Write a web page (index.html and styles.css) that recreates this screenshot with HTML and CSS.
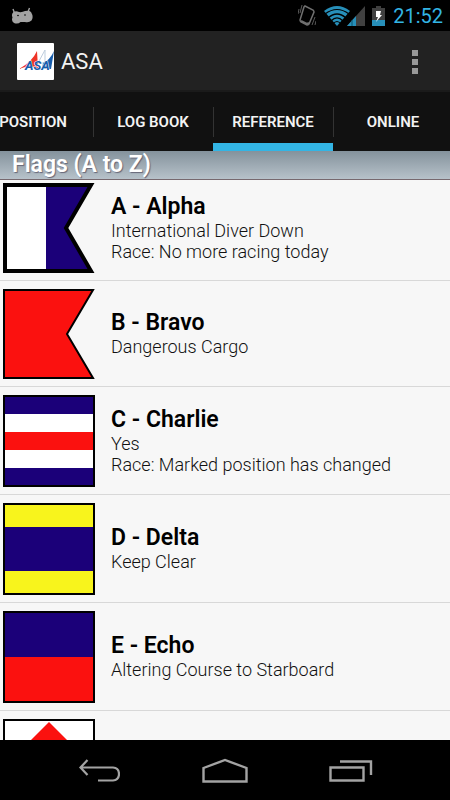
FILE: index.html
```html
<!DOCTYPE html>
<html lang="en">
<head>
  <meta charset="UTF-8">
  <meta name="viewport" content="width=device-width, initial-scale=1.0">
  <title>ASA</title>
  <link rel="stylesheet" href="styles.css">
</head>
<body>

  <div class="status-bar">
    <svg class="droid" width="22" height="18" viewBox="0 0 22 18">
      <path d="M3.500 6L2 2M17 5l1.500-4" stroke="#a3a3a3" stroke-width="1.400"/>
      <path d="M2.500 5Q5 3.500 8 5Q11 5.500 14 4Q18 3 20 5Q23 10 20.500 13.500Q18 16 14 15H9.500Q7 17.500 3 16Q0 14 1.500 10.500Q0 7 2.500 5Z" fill="#a3a3a3"/>
      <circle cx="7" cy="8.500" r="0.800" fill="#000"/>
      <circle cx="14" cy="8" r="0.800" fill="#000"/>
    </svg>
    <div class="status-icons">
      <svg width="18" height="22" viewBox="0 0 18 22">
        <path d="M7 1L15 5Q16 6 16 7L11 19Q10 20 9 20L3 17Q2 16 2 15L6 2Z" fill="none" stroke="#707070" stroke-width="1.5"/>
        <path d="M3 16L9 19L11 18" fill="none" stroke="#707070" stroke-width="2"/>
        <path d="M1 4L0 9M4 0L2 8M14 20L17 12M17 20L18 16" stroke="#5a5a5a"/>
      </svg>
      <svg class="wifi" width="26" height="20" viewBox="0 0 26 20">
        <path d="M0 5Q13-5 26 5L13 20Z" fill="#278fb9"/>
        <path d="M1 8Q13-1 25 8M4 12Q13 4 22 12M7 15Q13 9 19 15M9 18Q13 13 17 18" fill="none" stroke="#000" stroke-width="1.2"/>
      </svg>
      <svg class="signal" width="18" height="20" viewBox="0 0 18 20">
        <path d="M18 0V20H0Z" fill="#404040"/>
        <path d="M9 10V20H0Z" fill="#278fb9"/>
        <path d="M5 14V20" stroke="#0b526c"/>
      </svg>
      <svg class="battery" width="13" height="20" viewBox="0 0 13 20">
        <path d="M4 0H9V2H13V20H0V2H4Z" fill="#404040"/>
        <path d="M0 14H13V20H0Z" fill="#278fb9"/>
        <path d="M4 5H9L8 9H10L4 16L6 11H4Z" fill="#fff"/>
      </svg>
      <span class="clock">21:52</span>
    </div>
  </div>

  <header class="action-bar">
    <svg class="logo" width="37" height="37" viewBox="0 0 37 37">
      <rect width="37" height="37" rx="1" fill="#fff"/>
      <path d="M2 26Q15 19 20 8L21 25Q11 22 2 26Z" fill="#ee3427"/>
      <path d="M21 20L28 7V20Z" fill="#fff" stroke="#bdcddd"/>
      <path d="M26 20Q33 17 37 8L34 26H25Z" fill="#175dac"/>
      <text class="logo-text" x="8" y="27">ASA</text>
    </svg>
    <h1>ASA</h1>
    <button class="menu" aria-label="More options"><i></i><i></i><i></i></button>
  </header>

  <nav class="tabs">
    <button class="tab">POSITION</button>
    <button class="tab">LOG BOOK</button>
    <button class="tab active">REFERENCE</button>
    <button class="tab">ONLINE</button>
  </nav>

  <main>
    <h2>Flags (A to Z)</h2>
    <ul class="flags">
      <li>
        <svg class="flag" width="93" height="90" viewBox="0 0 93 90">
          <path d="M2 2H88L63 45L88 88H2Z" fill="#fff"/>
          <path d="M43 2H88L63 45L88 88H43Z" fill="#1b0079"/>
          <path d="M2 2H88L63 45L88 88H2Z" fill="none" stroke="#000" stroke-width="4"/>
        </svg>
        <div class="info">
          <h3>A - Alpha</h3>
          <p>International Diver Down</p>
          <p>Race: No more racing today</p>
        </div>
      </li>
      <li>
        <svg class="flag" width="93" height="90" viewBox="0 0 93 90">
          <path d="M1 1H90L64 45L90 89H1Z" fill="#fb110f" stroke="#000" stroke-width="2"/>
        </svg>
        <div class="info">
          <h3>B - Bravo</h3>
          <p>Dangerous Cargo</p>
        </div>
      </li>
      <li>
        <svg class="flag" width="93" height="92" viewBox="0 0 93 92">
          <rect x="1" y="1" width="90" height="90" fill="#fff"/>
          <path d="M1 1H91V19H1ZM1 73H91V91H1Z" fill="#1b0079"/>
          <path d="M1 37H91V55H1Z" fill="#fb110f"/>
          <rect x="1" y="1" width="90" height="90" fill="none" stroke="#000" stroke-width="2"/>
        </svg>
        <div class="info">
          <h3>C - Charlie</h3>
          <p>Yes</p>
          <p>Race: Marked position has changed</p>
        </div>
      </li>
      <li>
        <svg class="flag" width="93" height="92" viewBox="0 0 93 92">
          <rect x="1" y="1" width="90" height="90" fill="#f8f41c"/>
          <path d="M1 24H91V68H1Z" fill="#1b0079"/>
          <rect x="1" y="1" width="90" height="90" fill="none" stroke="#000" stroke-width="2"/>
        </svg>
        <div class="info">
          <h3>D - Delta</h3>
          <p>Keep Clear</p>
        </div>
      </li>
      <li>
        <svg class="flag" width="93" height="92" viewBox="0 0 93 92">
          <rect x="1" y="1" width="90" height="90" fill="#fb110f"/>
          <path d="M1 1H91V46H1Z" fill="#1b0079"/>
          <rect x="1" y="1" width="90" height="90" fill="none" stroke="#000" stroke-width="2"/>
        </svg>
        <div class="info">
          <h3>E - Echo</h3>
          <p>Altering Course to Starboard</p>
        </div>
      </li>
      <li>
        <svg class="flag" width="93" height="92" viewBox="0 0 93 92">
          <rect x="1" y="1" width="90" height="90" fill="#fff" stroke="#000" stroke-width="2"/>
          <path d="M46 3L89 46L46 89L3 46Z" fill="#fb110f"/>
        </svg>
      </li>
    </ul>
  </main>

  <footer class="nav-bar">
    <button aria-label="Back">
      <svg width="42" height="24" viewBox="0 0 42 24">
        <path d="M9.500 2L2.500 9.500L9.500 17M2.500 9.500H35Q41 10 41 16Q41 22 35 22.500H20" fill="none" stroke="#a3a3a3" stroke-width="2.200"/>
      </svg>
    </button>
    <button aria-label="Home">
      <svg width="46" height="26" viewBox="0 0 46 26">
        <path d="M1.500 11L23 3L44.500 11V24.500H1.500Z" fill="none" stroke="#a3a3a3" stroke-width="2.400"/>
      </svg>
    </button>
    <button aria-label="Recent apps">
      <svg width="44" height="24" viewBox="0 0 44 24">
        <path d="M1.500 9.500H34.500V22.500H1.500ZM11 3.500H42V17" fill="none" stroke="#a3a3a3" stroke-width="2.400"/>
      </svg>
    </button>
  </footer>

</body>
</html>
```

FILE: styles.css
```css
* {
  box-sizing: border-box;
}

body {
  margin: 0;
  height: 100vh;
  display: flex;
  flex-direction: column;
  overflow: hidden;
  background: #000;
  font-family: Roboto, sans-serif;
}

h1, h2, h3, p, ul {
  margin: 0;
  padding: 0;
}

button {
  border: none;
  background: none;
  padding: 0;
  font-family: inherit;
}

svg {
  display: block;
  flex: none;
}

.status-bar {
  flex: none;
  display: flex;
  justify-content: space-between;
  align-items: center;
  height: 31px;
  padding: 0 7px 0 11px;
}

.status-icons {
  display: flex;
  align-items: center;
}

.wifi {
  margin-left: 8px;
}

.signal {
  margin-left: -3px;
}

.battery {
  margin: 0 8px 0 7px;
}

.clock {
  color: #33b5e5;
  font-size: 20px;
}

.action-bar {
  flex: none;
  display: flex;
  align-items: center;
  height: 61px;
  padding: 2px 20px 0 17px;
  background: #222;
  border-bottom: 2px solid #1b1b1b;
}

.logo-text {
  font-size: 13px;
  font-weight: bold;
  font-style: italic;
  fill: #175dac;
  stroke: #fff;
  stroke-width: 1px;
  paint-order: stroke;
}

h1 {
  flex: 1;
  margin-left: 7px;
  color: #f3f3f3;
  font-size: 22px;
  font-weight: normal;
}

.menu {
  width: 30px;
  display: flex;
  flex-direction: column;
  align-items: center;
  gap: 3px;
}

.menu i {
  width: 6px;
  height: 6px;
  background: #999;
}

.tabs {
  flex: none;
  display: flex;
  height: 59px;
  margin-left: -27px;
  background: #111;
}

.tab {
  flex: 1 0 120px;
  color: #f3f3f3;
  font-size: 15px;
  font-weight: 600;
  border-bottom: 8px solid transparent;
  border-top: 8px solid transparent;
  /* short divider on the left edge */
  background: linear-gradient(#333, #333) no-repeat 0 7px / 1px 30px;
}

.tab.active {
  border-bottom-color: #33b5e5;
}

main {
  flex: 1;
  min-height: 0;
  overflow: hidden;
  background: #f7f7f7;
}

h2 {
  height: 29px;
  padding-left: 12px;
  color: #fff;
  font-size: 23px;
  font-weight: 600;
  line-height: 27px;
  text-shadow: 1px 1px 1px #667;
  background: linear-gradient(#84929c, #b7c2ca);
  border-bottom: 1px solid #77696f;
}

.flags {
  list-style: none;
}

.flags li {
  display: flex;
  align-items: center;
  gap: 15px;
  padding: 8px 3px 7px;
  border-bottom: 1px solid #d8d8d8;
}

.flags li:first-child {
  padding-top: 3px;
}

.info {
  padding-bottom: 2px;
}

h3 {
  font-size: 23px;
  font-weight: 600;
  line-height: 27px;
}

.info p {
  color: #111;
  font-size: 18px;
  font-weight: 300;
  line-height: 21px;
}

.nav-bar {
  flex: none;
  display: flex;
  justify-content: center;
  height: 60px;
}

.nav-bar button {
  flex: 0 0 28%;
  display: flex;
  align-items: center;
  justify-content: center;
}
```
